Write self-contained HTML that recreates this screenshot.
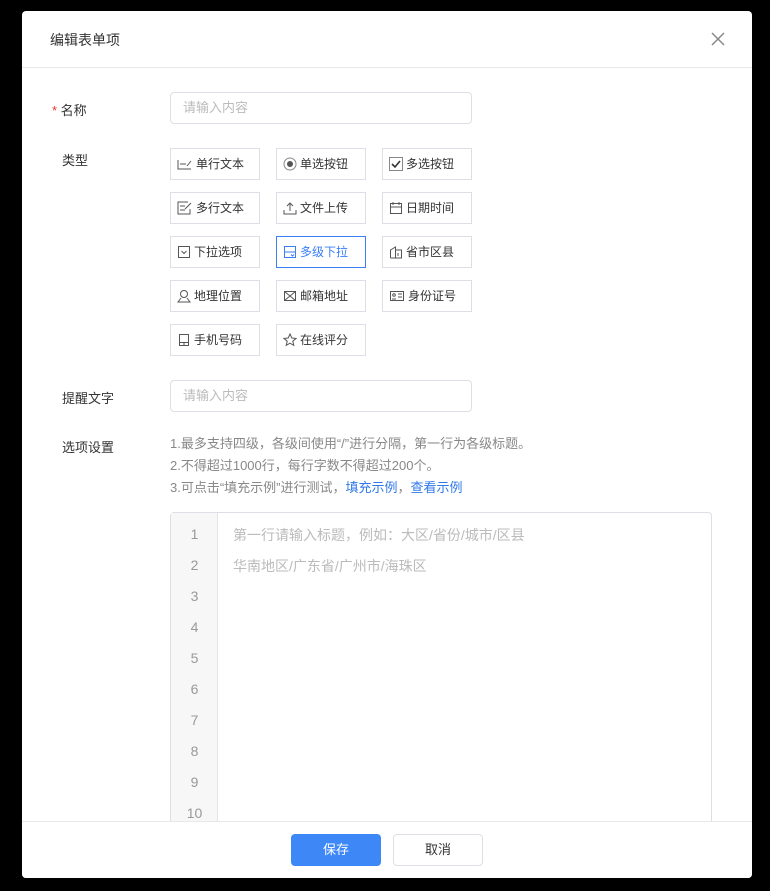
<!DOCTYPE html>
<html><head><meta charset="utf-8"><style>
*{box-sizing:border-box;margin:0;padding:0}
body{width:770px;height:891px;background:#000;font-family:"Liberation Sans","Noto Sans CJK SC",sans-serif;font-size:13px;color:#333;position:relative;overflow:hidden}
.dlg{position:absolute;left:22px;top:11px;width:730px;height:867px;background:#fff;border-radius:4px;overflow:hidden}
.hd{height:57px;border-bottom:1px solid #e8e8e8;position:relative}
.hd .t{position:absolute;left:28px;top:19px;font-size:14px;color:#333}
.x{position:absolute;left:689px;top:21px}
.lbl{position:absolute;left:40px;font-size:13px;color:#333}
.inp{position:absolute;left:148px;width:302px;height:32px;border:1px solid #dcdfe6;border-radius:4px;color:#bbb;padding-left:12px;line-height:30px;font-size:13px}
.it{position:absolute;width:90px;height:32px;border:1px solid #dcdfe6;font-size:12px;color:#333;line-height:30px;display:flex;align-items:center;padding-left:6px}
.it svg{margin-right:3px;flex:none}
.it.a{border-color:#3a7ff5;color:#3a7ff5}
.tip{position:absolute;left:148px;top:422px;font-size:13px;color:#888;line-height:22px}
.tip a{color:#2f78e8;text-decoration:none}
.ed{position:absolute;left:148px;top:501px;width:542px;height:400px;border:1px solid #dcdfe6;border-radius:4px}
.gut{position:absolute;left:0;top:0;width:47px;height:100%;background:#f7f7f7;border-right:1px solid #e5e5e5}
.ln{position:absolute;left:0;width:47px;text-align:center;color:#999;font-size:14px}
.tx{position:absolute;left:62px;color:#bbb;font-size:14px}
.ft{position:absolute;left:0;top:810px;width:730px;height:57px;border-top:1px solid #e8e8e8;background:#fff}
.btn{position:absolute;top:12px;width:90px;height:32px;border-radius:4px;text-align:center;line-height:32px;font-size:13px}
</style></head><body>
<div class="dlg">
<div class="hd"><div class="t">编辑表单项</div>
<svg class="x" width="14" height="14" viewBox="0 0 14 14"><path d="M1 1L13 13M13 1L1 13" stroke="#888" stroke-width="1.5"/></svg></div>
<div class="lbl" style="left:30px;top:89px"><span style="color:#e33">*</span> 名称</div>
<div class="inp" style="top:81px">请输入内容</div>
<div class="lbl" style="top:139px">类型</div>

<div class="it" style="left:148px;top:137px"><svg width="16" height="12" viewBox="0 0 16 12"><path d="M1 2v9h13M3 6h6M10 8l4-5" stroke="#555" fill="none"/></svg>单行文本</div>
<div class="it" style="left:254px;top:137px"><svg width="14" height="14"><circle cx="7" cy="7" r="6" stroke="#888" fill="none"/><circle cx="7" cy="7" r="3" fill="#555"/></svg>单选按钮</div>
<div class="it" style="left:360px;top:137px"><svg width="14" height="14"><rect x=".5" y=".5" width="13" height="13" stroke="#888" fill="none"/><path d="M3 7l3 3 5-6" stroke="#333" stroke-width="1.6" fill="none"/></svg>多选按钮</div>

<div class="it" style="left:148px;top:181px"><svg width="16" height="14" viewBox="0 0 16 14"><path d="M11 1H1v12h12V8M3 5h5M3 9h5M8 8l6-6" stroke="#555" fill="none"/></svg>多行文本</div>
<div class="it" style="left:254px;top:181px"><svg width="14" height="14"><path d="M1 9v4h12V9M7 10V2M4 5l3-3 3 3" stroke="#555" fill="none"/></svg>文件上传</div>
<div class="it" style="left:360px;top:181px"><svg width="14" height="14"><rect x="1.5" y="2.5" width="11" height="10" stroke="#555" fill="none"/><path d="M4 1v3M10 1v3M1.5 6h11" stroke="#555"/></svg>日期时间</div>

<div class="it" style="left:148px;top:225px"><svg width="14" height="14"><rect x="1.5" y="1.5" width="11" height="11" stroke="#555" fill="none"/><path d="M4.5 6l2.5 2.5L9.5 6" stroke="#555" fill="none"/></svg>下拉选项</div>
<div class="it a" style="left:254px;top:225px"><svg width="14" height="14"><rect x="1.5" y="1.5" width="11" height="11" stroke="#3a7ff5" fill="none"/><path d="M1.5 7h11M8 9.5l1.5 1.5 1.5-1.5" stroke="#3a7ff5" fill="none"/></svg>多级下拉</div>
<div class="it" style="left:360px;top:225px"><svg width="14" height="14"><path d="M1.5 13V5l5-3v11M6.5 5h6v8h-11M9 8v3" stroke="#555" fill="none"/></svg>省市区县</div>

<div class="it" style="left:148px;top:269px"><svg width="14" height="14"><circle cx="7" cy="5" r="3.5" stroke="#555" fill="none"/><path d="M4 9l-3 4h12l-3-4" stroke="#555" fill="none"/></svg>地理位置</div>
<div class="it" style="left:254px;top:269px"><svg width="14" height="14"><rect x="1.5" y="2.5" width="11" height="9" stroke="#555" fill="none"/><path d="M1.5 2.5l11 9M12.5 2.5l-11 9" stroke="#555"/></svg>邮箱地址</div>
<div class="it" style="left:360px;top:269px"><svg width="16" height="14"><rect x="1.5" y="2.5" width="13" height="9" stroke="#555" fill="none"/><circle cx="5" cy="6" r="1.3" stroke="#555" fill="none"/><path d="M3 10h4M9 5h4M9 8h4" stroke="#555"/></svg>身份证号</div>

<div class="it" style="left:148px;top:313px"><svg width="14" height="14"><rect x="2.5" y="1.5" width="9" height="11" stroke="#555" fill="none"/><path d="M2.5 9.5h9M6 11h2" stroke="#555"/></svg>手机号码</div>
<div class="it" style="left:254px;top:313px"><svg width="14" height="14"><path d="M7 1l1.8 4 4.2.4-3.2 2.8 1 4.2L7 10.2 3.2 12.4l1-4.2L1 5.4l4.2-.4z" stroke="#555" fill="none"/></svg>在线评分</div>

<div class="lbl" style="top:377px">提醒文字</div>
<div class="inp" style="top:369px">请输入内容</div>
<div class="lbl" style="top:426px">选项设置</div>
<div class="tip">1.最多支持四级，各级间使用“/”进行分隔，第一行为各级标题。<br>2.不得超过1000行，每行字数不得超过200个。<br>3.可点击“填充示例”进行测试，<a>填充示例</a>，<a>查看示例</a></div>
<div class="ed"><div class="gut"></div>
<div class="ln" style="top:13px">1</div><div class="ln" style="top:44px">2</div><div class="ln" style="top:75px">3</div><div class="ln" style="top:106px">4</div><div class="ln" style="top:137px">5</div><div class="ln" style="top:168px">6</div><div class="ln" style="top:199px">7</div><div class="ln" style="top:230px">8</div><div class="ln" style="top:261px">9</div><div class="ln" style="top:292px">10</div>
<div class="tx" style="top:12px">第一行请输入标题，例如：大区/省份/城市/区县</div>
<div class="tx" style="top:43px">华南地区/广东省/广州市/海珠区</div>
</div>
<div class="ft">
<div class="btn" style="left:269px;background:#3d87f7;color:#fff">保存</div>
<div class="btn" style="left:371px;border:1px solid #dcdfe6;color:#333;line-height:30px">取消</div>
</div>
</div>
</body></html>
